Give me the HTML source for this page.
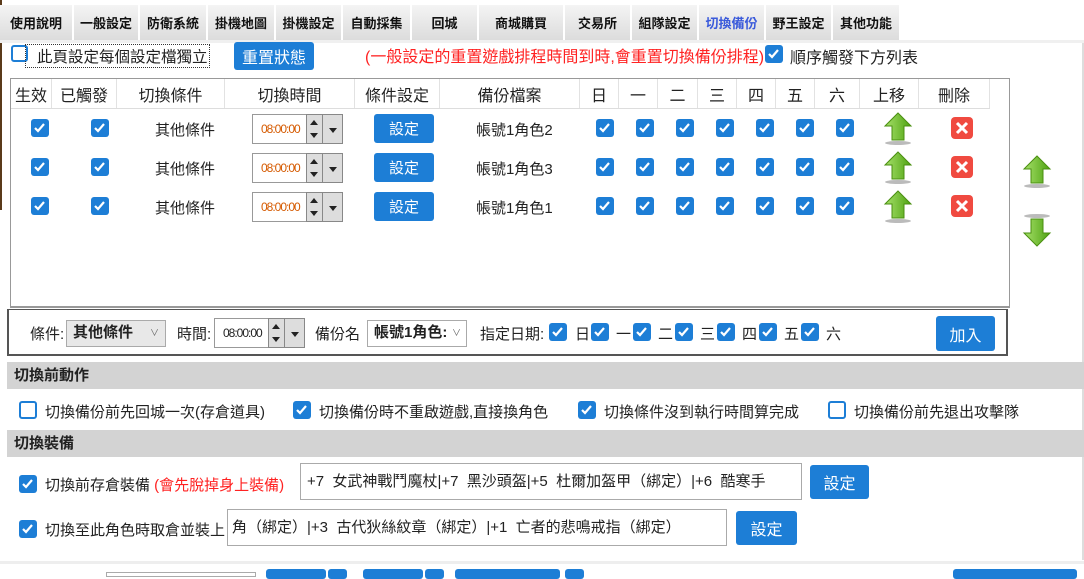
<!DOCTYPE html>
<html><head><meta charset="utf-8">
<style>
*{box-sizing:border-box;margin:0;padding:0}
body{width:1084px;height:575px;overflow:hidden;background:#fff;font-family:"Liberation Sans","Noto Sans CJK TC",sans-serif;color:#222;position:relative}
.a{position:absolute}
.tab{position:absolute;top:5px;height:35px;background:linear-gradient(#f4f4f4,#dcdcdc);font-size:13px;font-weight:bold;display:flex;align-items:center;justify-content:center;color:#111}
.cb{position:absolute;width:18px;height:18px;background:#1d7ed6;border-radius:3px}
.cb svg{position:absolute;left:2px;top:2px}
.ucb{position:absolute;width:18px;height:18px;border:2px solid #1d7ed6;border-radius:3px;background:#fff}
.btn{position:absolute;background:#1d7ed6;color:#fff;border-radius:3px;font-size:15px;display:flex;align-items:center;justify-content:center}
.t{position:absolute;white-space:nowrap;font-size:15px}
.hd{position:absolute;top:79px;height:29px;font-size:16px;display:flex;align-items:center;justify-content:center;border-right:1px solid #e2e2e2;background:#fff}
.pk{position:absolute;width:90px;height:30px;border:1px solid #999;background:#fff}
.pk .v{position:absolute;left:8px;top:7px;font-size:12px;letter-spacing:-1px;color:#d55a00}
.pk .s{position:absolute;left:53px;top:-1px;width:17px;height:30px;background:#ddd;border:1px solid #888}
.pk .s:before{content:"";position:absolute;left:3px;top:5px;border:4px solid transparent;border-bottom:5px solid #222;border-top:0}
.pk .s:after{content:"";position:absolute;left:3px;top:18px;border:4px solid transparent;border-top:5px solid #222;border-bottom:0}
.pk .d{position:absolute;left:69px;top:-1px;width:21px;height:30px;background:#ddd;border:1px solid #888}
.pk .d:after{content:"";position:absolute;left:6px;top:13px;border:4px solid transparent;border-top:5px solid #222;border-bottom:0}
.sec{position:absolute;left:7px;width:1077px;height:27px;background:#d3d3d3;font-size:15px;font-weight:bold;padding-left:7px;line-height:27px}
.inp{position:absolute;border:1px solid #aaa;background:#fff;font-size:15px;white-space:nowrap;overflow:hidden;padding-left:6px}
</style></head><body>
<div class="a" style="left:0;top:0;width:2px;height:210px;background:#5a3a1a"></div>
<div class="a" style="left:1082px;top:40px;width:2px;height:520px;background:#ddd"></div>

<div class="tab" style="left:0;width:72px">使用說明</div>
<div class="tab" style="left:74px;width:64px">一般設定</div>
<div class="tab" style="left:140px;width:66px">防衛系統</div>
<div class="tab" style="left:208px;width:66px">掛機地圖</div>
<div class="tab" style="left:276px;width:65px">掛機設定</div>
<div class="tab" style="left:343px;width:67px">自動採集</div>
<div class="tab" style="left:412px;width:65px">回城</div>
<div class="tab" style="left:479px;width:84px">商城購買</div>
<div class="tab" style="left:565px;width:65px">交易所</div>
<div class="tab" style="left:632px;width:65px">組隊設定</div>
<div class="tab" style="left:699px;width:65px;color:#3b5bdb">切換備份</div>
<div class="tab" style="left:766px;width:65px">野王設定</div>
<div class="tab" style="left:833px;width:66px">其他功能</div>
<div class="a" style="left:0;top:40px;width:1084px;height:3px;background:#f0f0f0"></div>

<div class="ucb" style="left:11px;top:45px;width:17px;height:17px"></div>
<div class="t" style="left:25px;top:44px;border:1px dotted #333;padding:0 1px 0 11px;font-size:15.5px">此頁設定每個設定檔獨立</div>
<div class="btn" style="left:234px;top:42px;width:80px;height:28px;font-size:16px">重置狀態</div>
<div class="t" style="left:365px;top:43px;color:#f22;font-size:16px">(一般設定的重置遊戲排程時間到時,會重置切換備份排程)</div>
<div class="cb" style="left:765px;top:45px"><svg width="13" height="13" viewBox="0 0 13 13"><path d="M2 7l3 3 6-7" stroke="#fff" stroke-width="2.2" fill="none"/></svg></div>
<div class="t" style="left:790px;top:44px;font-size:16px">順序觸發下方列表</div>

<div class="a" style="left:10px;top:78px;width:1000px;height:230px;border:1px solid #999;border-bottom:2px solid #999"></div>
<div class="a" style="left:11px;top:108px;width:979px;height:1px;background:#ddd"></div>
<div class="hd" style="left:11px;width:41px">生效</div>
<div class="hd" style="left:52px;width:65px">已觸發</div>
<div class="hd" style="left:117px;width:108px">切換條件</div>
<div class="hd" style="left:225px;width:130px">切換時間</div>
<div class="hd" style="left:355px;width:85px">條件設定</div>
<div class="hd" style="left:440px;width:140px">備份檔案</div>
<div class="hd" style="left:580px;width:39px">日</div>
<div class="hd" style="left:619px;width:39px">一</div>
<div class="hd" style="left:658px;width:40px">二</div>
<div class="hd" style="left:698px;width:39px">三</div>
<div class="hd" style="left:737px;width:39px">四</div>
<div class="hd" style="left:776px;width:39px">五</div>
<div class="hd" style="left:815px;width:45px">六</div>
<div class="hd" style="left:860px;width:59px">上移</div>
<div class="hd" style="left:919px;width:71px">刪除</div>

<svg width="0" height="0" style="position:absolute"><defs>
<symbol id="ck" viewBox="0 0 13 13"><path d="M2 7l3 3 6-7" stroke="#fff" stroke-width="2.2" fill="none"/></symbol>
<linearGradient id="g" x1="0" x2="1"><stop offset="0" stop-color="#a6e06a"/><stop offset="1" stop-color="#4fa312"/></linearGradient>
<symbol id="up" viewBox="0 0 30 34"><ellipse cx="15" cy="31" rx="13" ry="2" fill="#bbb"/><path d="M15 1L28 14H21V28H9V14H2Z" fill="url(#g)" stroke="#4a8f10"/></symbol>
<symbol id="dn" viewBox="0 0 30 34"><ellipse cx="15" cy="3" rx="13" ry="2" fill="#bbb"/><path d="M15 33L28 20H21V6H9V20H2Z" fill="url(#g)" stroke="#4a8f10"/></symbol>
<symbol id="x" viewBox="0 0 24 24"><rect x="1" y="1" width="22" height="22" rx="4" fill="#f04a40"/><path d="M7 7L17 17M17 7L7 17" stroke="#fff" stroke-width="3"/></symbol>
</defs></svg>

<div class="cb" style="left:31px;top:119px"><svg width="13" height="13"><use href="#ck"/></svg></div>
<div class="cb" style="left:91px;top:119px"><svg width="13" height="13"><use href="#ck"/></svg></div>
<div class="t" style="left:155px;top:119px">其他條件</div>
<div class="pk" style="left:252px;top:114px"><span class="v">08:00:00</span><div class="s"></div><div class="d"></div></div>
<div class="btn" style="left:374px;top:114px;width:60px;height:29px">設定</div>
<div class="t" style="left:476px;top:119px">帳號1角色2</div>
<div class="cb" style="left:596px;top:119px"><svg width="13" height="13"><use href="#ck"/></svg></div>
<div class="cb" style="left:636px;top:119px"><svg width="13" height="13"><use href="#ck"/></svg></div>
<div class="cb" style="left:676px;top:119px"><svg width="13" height="13"><use href="#ck"/></svg></div>
<div class="cb" style="left:716px;top:119px"><svg width="13" height="13"><use href="#ck"/></svg></div>
<div class="cb" style="left:756px;top:119px"><svg width="13" height="13"><use href="#ck"/></svg></div>
<div class="cb" style="left:796px;top:119px"><svg width="13" height="13"><use href="#ck"/></svg></div>
<div class="cb" style="left:836px;top:119px"><svg width="13" height="13"><use href="#ck"/></svg></div>
<svg class="a" style="left:883px;top:112px" width="30" height="34"><use href="#up"/></svg>
<svg class="a" style="left:950px;top:116px" width="24" height="24"><use href="#x"/></svg>

<div class="cb" style="left:31px;top:158px"><svg width="13" height="13"><use href="#ck"/></svg></div>
<div class="cb" style="left:91px;top:158px"><svg width="13" height="13"><use href="#ck"/></svg></div>
<div class="t" style="left:155px;top:158px">其他條件</div>
<div class="pk" style="left:252px;top:153px"><span class="v">08:00:00</span><div class="s"></div><div class="d"></div></div>
<div class="btn" style="left:374px;top:153px;width:60px;height:29px">設定</div>
<div class="t" style="left:476px;top:158px">帳號1角色3</div>
<div class="cb" style="left:596px;top:158px"><svg width="13" height="13"><use href="#ck"/></svg></div>
<div class="cb" style="left:636px;top:158px"><svg width="13" height="13"><use href="#ck"/></svg></div>
<div class="cb" style="left:676px;top:158px"><svg width="13" height="13"><use href="#ck"/></svg></div>
<div class="cb" style="left:716px;top:158px"><svg width="13" height="13"><use href="#ck"/></svg></div>
<div class="cb" style="left:756px;top:158px"><svg width="13" height="13"><use href="#ck"/></svg></div>
<div class="cb" style="left:796px;top:158px"><svg width="13" height="13"><use href="#ck"/></svg></div>
<div class="cb" style="left:836px;top:158px"><svg width="13" height="13"><use href="#ck"/></svg></div>
<svg class="a" style="left:883px;top:151px" width="30" height="34"><use href="#up"/></svg>
<svg class="a" style="left:950px;top:155px" width="24" height="24"><use href="#x"/></svg>

<div class="cb" style="left:31px;top:197px"><svg width="13" height="13"><use href="#ck"/></svg></div>
<div class="cb" style="left:91px;top:197px"><svg width="13" height="13"><use href="#ck"/></svg></div>
<div class="t" style="left:155px;top:197px">其他條件</div>
<div class="pk" style="left:252px;top:192px"><span class="v">08:00:00</span><div class="s"></div><div class="d"></div></div>
<div class="btn" style="left:374px;top:192px;width:60px;height:29px">設定</div>
<div class="t" style="left:476px;top:197px">帳號1角色1</div>
<div class="cb" style="left:596px;top:197px"><svg width="13" height="13"><use href="#ck"/></svg></div>
<div class="cb" style="left:636px;top:197px"><svg width="13" height="13"><use href="#ck"/></svg></div>
<div class="cb" style="left:676px;top:197px"><svg width="13" height="13"><use href="#ck"/></svg></div>
<div class="cb" style="left:716px;top:197px"><svg width="13" height="13"><use href="#ck"/></svg></div>
<div class="cb" style="left:756px;top:197px"><svg width="13" height="13"><use href="#ck"/></svg></div>
<div class="cb" style="left:796px;top:197px"><svg width="13" height="13"><use href="#ck"/></svg></div>
<div class="cb" style="left:836px;top:197px"><svg width="13" height="13"><use href="#ck"/></svg></div>
<svg class="a" style="left:883px;top:190px" width="30" height="34"><use href="#up"/></svg>
<svg class="a" style="left:950px;top:194px" width="24" height="24"><use href="#x"/></svg>

<svg class="a" style="left:1022px;top:155px" width="30" height="34"><use href="#up"/></svg>
<svg class="a" style="left:1022px;top:213px" width="30" height="34"><use href="#dn"/></svg>

<div class="a" style="left:7px;top:309px;width:1001px;height:47px;border:2px solid #555;border-top:1px solid #555"></div>
<div class="t" style="left:30px;top:323px">條件:</div>
<div class="inp" style="left:66px;top:320px;width:100px;height:27px;background:#e8e8e8;font-weight:bold;line-height:24px">其他條件<span style="position:absolute;right:6px;font-size:9px;color:#666;font-weight:normal">∨</span></div>
<div class="t" style="left:177px;top:323px">時間:</div>
<div class="pk" style="left:214px;top:318px;height:30px"><span class="v" style="color:#222">08:00:00</span><div class="s"></div><div class="d"></div></div>
<div class="t" style="left:315px;top:323px">備份名</div>
<div class="inp" style="left:367px;top:320px;width:100px;height:27px;font-weight:bold;line-height:24px">帳號1角色:<span style="position:absolute;right:5px;font-size:9px;color:#666;font-weight:normal">∨</span></div>
<div class="t" style="left:480px;top:323px">指定日期:</div>
<div class="cb" style="left:549px;top:323px"><svg width="13" height="13"><use href="#ck"/></svg></div><div class="t" style="left:575px;top:323px">日</div>
<div class="cb" style="left:591px;top:323px"><svg width="13" height="13"><use href="#ck"/></svg></div><div class="t" style="left:616px;top:323px">一</div>
<div class="cb" style="left:633px;top:323px"><svg width="13" height="13"><use href="#ck"/></svg></div><div class="t" style="left:658px;top:323px">二</div>
<div class="cb" style="left:675px;top:323px"><svg width="13" height="13"><use href="#ck"/></svg></div><div class="t" style="left:700px;top:323px">三</div>
<div class="cb" style="left:717px;top:323px"><svg width="13" height="13"><use href="#ck"/></svg></div><div class="t" style="left:742px;top:323px">四</div>
<div class="cb" style="left:759px;top:323px"><svg width="13" height="13"><use href="#ck"/></svg></div><div class="t" style="left:784px;top:323px">五</div>
<div class="cb" style="left:801px;top:323px"><svg width="13" height="13"><use href="#ck"/></svg></div><div class="t" style="left:826px;top:323px">六</div>
<div class="btn" style="left:936px;top:316px;width:59px;height:35px;font-size:16px">加入</div>

<div class="sec" style="top:362px">切換前動作</div>
<div class="ucb" style="left:19px;top:401px"></div>
<div class="t" style="left:45px;top:401px">切換備份前先回城一次(存倉道具)</div>
<div class="cb" style="left:293px;top:401px"><svg width="13" height="13"><use href="#ck"/></svg></div>
<div class="t" style="left:319px;top:401px">切換備份時不重啟遊戲,直接換角色</div>
<div class="cb" style="left:578px;top:401px"><svg width="13" height="13"><use href="#ck"/></svg></div>
<div class="t" style="left:604px;top:401px">切換條件沒到執行時間算完成</div>
<div class="ucb" style="left:828px;top:401px"></div>
<div class="t" style="left:854px;top:401px">切換備份前先退出攻擊隊</div>

<div class="sec" style="top:430px">切換裝備</div>
<div class="cb" style="left:19px;top:475px"><svg width="13" height="13"><use href="#ck"/></svg></div>
<div class="t" style="left:45px;top:474px">切換前存倉裝備 <span style="color:#f22">(會先脫掉身上裝備)</span></div>
<div class="inp" style="left:300px;top:463px;width:502px;height:37px;line-height:35px;padding-left:6px">+7&nbsp; 女武神戰鬥魔杖|+7&nbsp; 黑沙頭盔|+5&nbsp; 杜爾加盔甲（綁定）|+6&nbsp; 酷寒手</div>
<div class="btn" style="left:810px;top:465px;width:59px;height:34px;font-size:16px">設定</div>
<div class="cb" style="left:19px;top:520px"><svg width="13" height="13"><use href="#ck"/></svg></div>
<div class="t" style="left:45px;top:519px">切換至此角色時取倉並裝上</div>
<div class="inp" style="left:227px;top:509px;width:500px;height:37px;line-height:35px;padding-left:4px">角（綁定）|+3&nbsp; 古代狄絲紋章（綁定）|+1&nbsp; 亡者的悲鳴戒指（綁定）</div>
<div class="btn" style="left:736px;top:511px;width:61px;height:34px;font-size:16px">設定</div>

<div class="a" style="left:0;top:561px;width:1084px;height:3px;background:#eee"></div>
<div class="a" style="left:106px;top:572px;width:150px;height:5px;border:1px solid #aaa"></div>
<div class="btn" style="left:266px;top:569px;width:60px;height:10px"></div>
<div class="btn" style="left:328px;top:569px;width:19px;height:10px"></div>
<div class="btn" style="left:363px;top:569px;width:60px;height:10px"></div>
<div class="btn" style="left:425px;top:569px;width:19px;height:10px"></div>
<div class="btn" style="left:455px;top:569px;width:105px;height:10px"></div>
<div class="btn" style="left:565px;top:569px;width:19px;height:10px"></div>
<div class="btn" style="left:953px;top:569px;width:124px;height:10px"></div>
</body></html>
